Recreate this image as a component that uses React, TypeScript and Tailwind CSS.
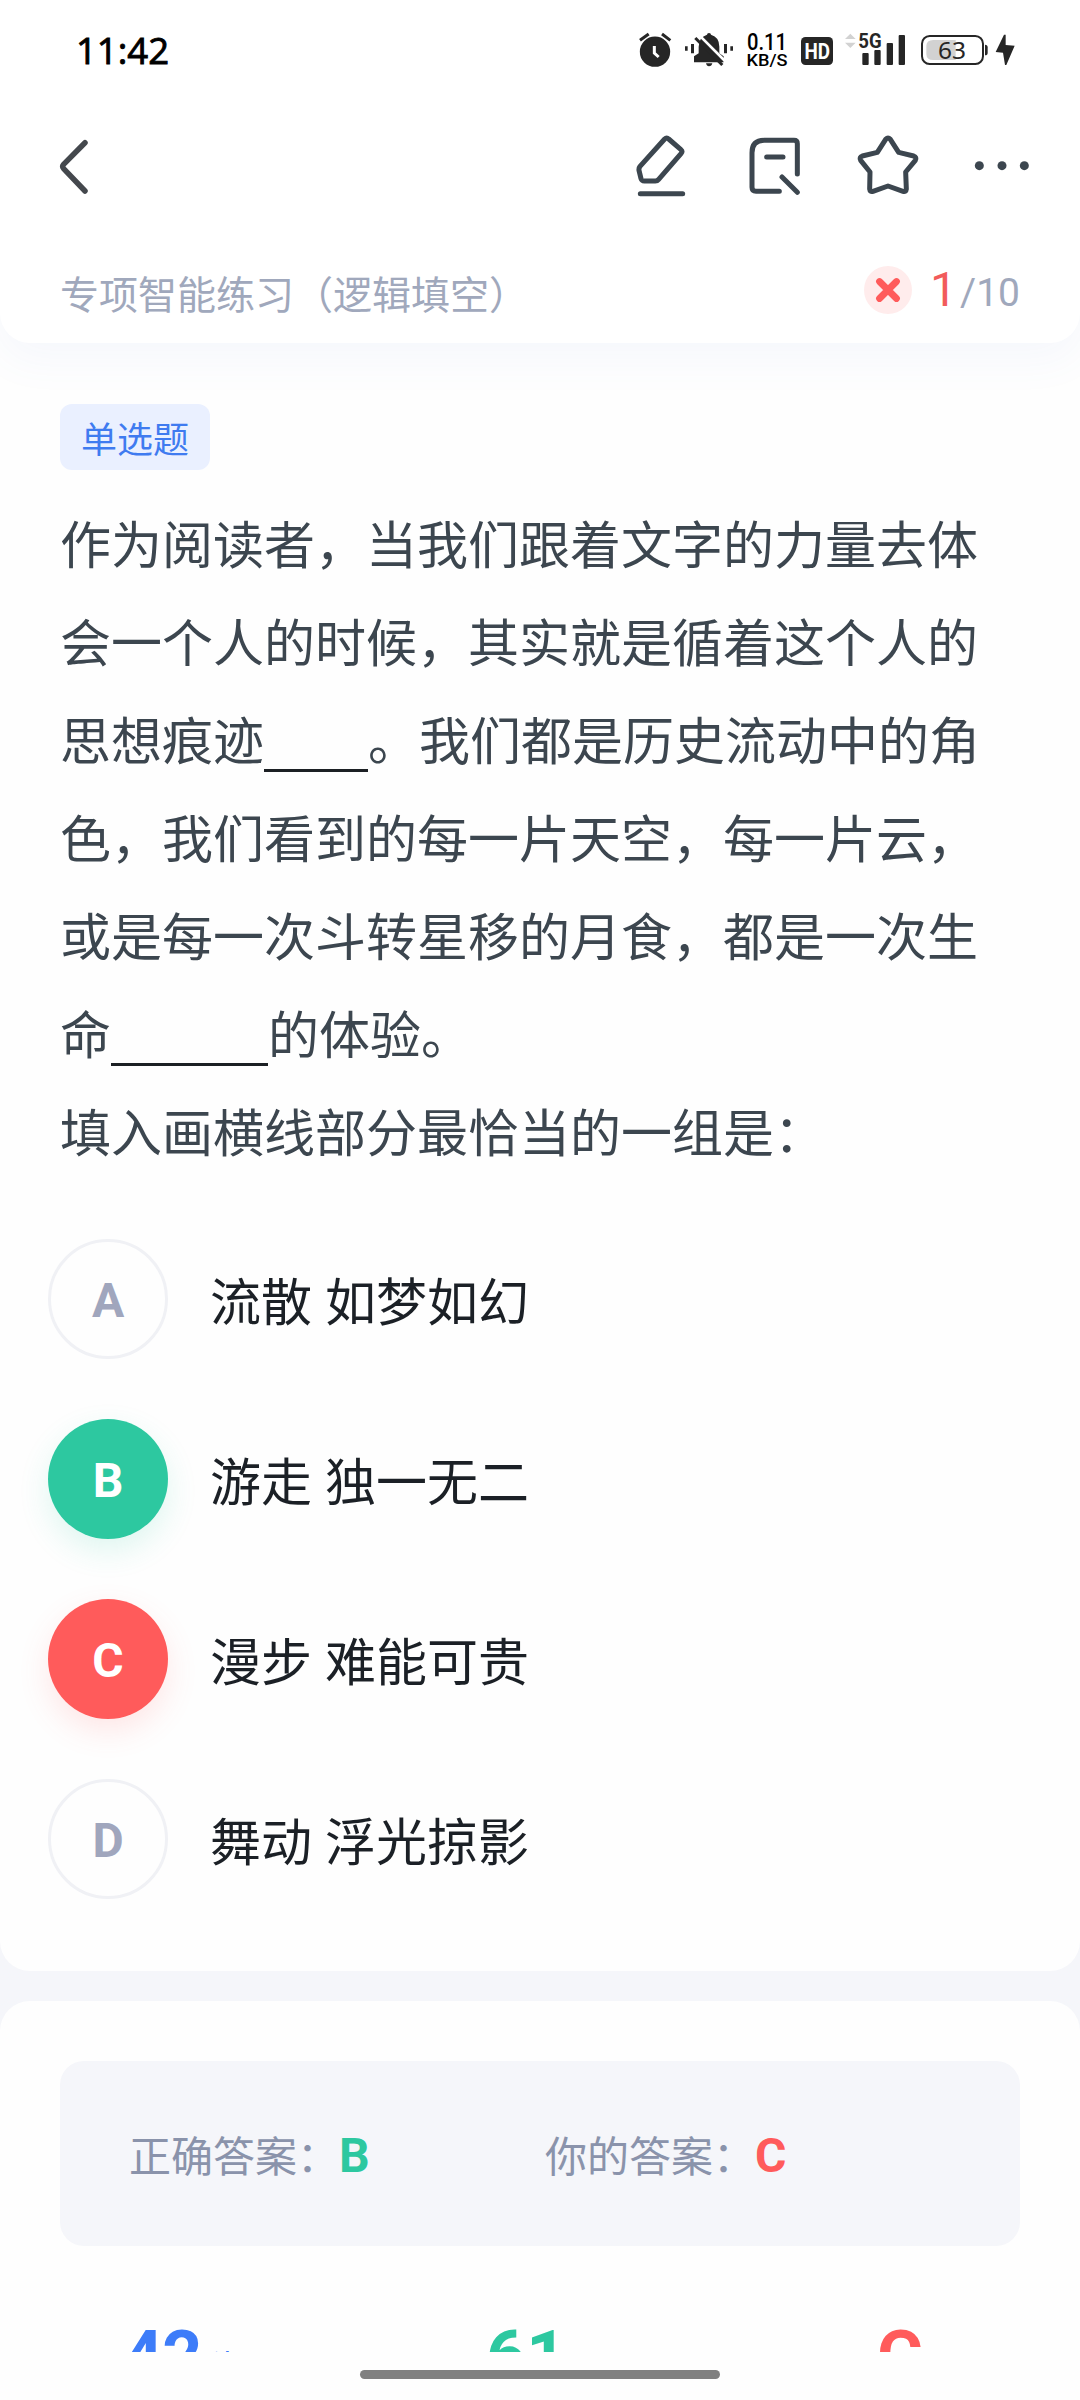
import React from "react";

const cjk = "font-['Noto_Sans_CJK_SC',sans-serif]";

function StatusIcons() {
  const ink = "#262626";
  return (
    <div className="flex items-center">
      <svg width="33" height="36" viewBox="117 96 99 108">
        <circle cx="165" cy="155" r="45.5" fill={ink} />
        <path d="M120 121L146 102M186 102L211 121" stroke={ink} strokeWidth="9" />
        <path d="M163 138V159L176 171" fill="none" stroke="#fff" strokeWidth="9" />
      </svg>
      <svg className="ml-3" width="50" height="36" viewBox="252 96 150 108">
        <path d="M255 139h8v13h-8zM273 132h9v28h-9zM372 132h9v28h-9zM391 139h8v13h-8z" fill={ink} />
        <path
          d="M321 104Q321 99 327 99Q333 99 333 104Q358 111 358 140V160L371 169V187H282V169L296 160V140Q297 111 321 104ZM318 190H337Q335 199 327 199Q320 199 318 190Z"
          fill={ink}
        />
        <path d="M296 104L378 186" stroke="#fff" strokeWidth="8" />
        <path d="M286 114L367 195" stroke={ink} strokeWidth="9" />
      </svg>
      <div className="ml-[13px] flex h-9 w-10 flex-col font-['Roboto',sans-serif] font-medium text-black">
        <svg className="overflow-visible" width="40" height="20" viewBox="0 0 40 20">
          <text x="0" y="17.6" textLength="40" lengthAdjust="spacingAndGlyphs" fontSize="24">0.11</text>
        </svg>
        <svg className="overflow-visible" width="40" height="16" viewBox="0 0 40 16">
          <text x="-0.5" y="14.4" textLength="41" lengthAdjust="spacingAndGlyphs" fontSize="17">KB/S</text>
        </svg>
      </div>
      <svg className="ml-[14px]" width="32" height="36" viewBox="0 0 32 36">
        <rect x="0" y="5" width="32" height="28" rx="4.5" fill={ink} />
        <text x="3.5" y="27.2" textLength="25.5" lengthAdjust="spacingAndGlyphs" fill="#fff" fontSize="22.5" className="font-['Roboto',sans-serif] font-bold">HD</text>
      </svg>
      <svg className="ml-3 overflow-visible" width="60" height="36" viewBox="735 96 180 108">
        <path d="M751 101L767 117H735ZM735 128H767L751 144Z" fill="#d2d2d2" />
        <path d="M790 159h13q3 0 3 3v30q0 3-3 3h-13q-3 0-3-3v-30q0-3 3-3zM826 150h13q3 0 3 3v39q0 3-3 3h-13q-3 0-3-3v-39q0-3 3-3zM863 129h13q3 0 3 3v60q0 3-3 3h-13q-3 0-3-3v-60q0-3 3-3zM899 105h13q3 0 3 3v84q0 3-3 3h-13q-3 0-3-3v-84q0-3 3-3z" fill={ink} />
        <text x="775" y="143" fontSize="61" textLength="70" lengthAdjust="spacingAndGlyphs" fill={ink} className="font-['Roboto',sans-serif] font-bold">5G</text>
      </svg>
      <svg className="ml-[15px]" width="68" height="36" viewBox="960 96 204 108">
        <path d="M1067 120H1000Q979 120 979 138V162Q979 180 1000 180H1067Z" fill="#d2d2d2" />
        <rect x="966" y="108" width="183" height="84" rx="23" fill="none" stroke={ink} strokeWidth="6" />
        <path d="M1155 134Q1163 134 1163 142V158Q1163 166 1155 166Z" fill={ink} />
        <text x="1014" y="178" fontSize="73" textLength="84" lengthAdjust="spacingAndGlyphs" fill={ink} className="font-['Noto_Sans',sans-serif]">63</text>
      </svg>
      <svg className="ml-[7px]" width="20" height="36" viewBox="1185 96 60 108">
        <path d="M1212 104L1187 156L1209 158L1215 195H1219L1244 137L1217 135V104Z" fill={ink} />
      </svg>
    </div>
  );
}

function NavBar() {
  const line = {
    fill: "none",
    stroke: "#3c464f",
    strokeWidth: 15,
    strokeLinecap: "round" as const,
    strokeLinejoin: "round" as const,
  };
  return (
    <div className="flex h-[134px] items-center pr-[50px] pl-[58px]">
      <svg width="32" height="68" viewBox="58 133 32 68">
        <path d="M85 142.7L63.6 164.4Q61.8 166.4 63.6 168.6L85 191" {...line} stroke="#44484d" strokeWidth="5.5" />
      </svg>
      <svg className="ml-auto" width="51" height="68" viewBox="105 399 153 204">
        <path d="M194 417Q200 411 206 417L242 448Q249 454 243 461L176 538Q172 543 166 543H133Q125 543 123 536L117 511Q116 504 120 499Z" {...line} />
        <path d="M121 581H248" {...line} />
      </svg>
      <svg className="ml-[62px]" width="53" height="68" viewBox="444 399 159 204">
        <path d="M592 522V431Q592 421 582 421H493Q456 421 456 458V562Q456 574 468 574H538M500 471H549M546 531L592 577" {...line} />
      </svg>
      <svg className="ml-[55px]" width="64" height="68" viewBox="768 399 192 204">
        <path d="M857 418Q864 411 871 418L896 457L941 468Q951 472 946 481L917 516L919 567Q918 577 909 574L864 558L819 574Q810 577 809 567L810 516L782 481Q777 472 787 468L832 457Z" {...line} />
      </svg>
      <svg className="ml-[54px]" width="56" height="68" viewBox="1122 399 168 204">
        <g fill="#3c464f">
          <circle cx="1138" cy="497" r="13.5" />
          <circle cx="1206" cy="497" r="13.5" />
          <circle cx="1273" cy="497" r="13.5" />
        </g>
      </svg>
    </div>
  );
}

function Blank({ width }: { width: string }) {
  return <span className={`inline-block h-px translate-y-3 border-b-[3px] border-[#1c2024] ${width}`} />;
}

const options = [
  { key: "A", text: "流散 如梦如幻", circle: "border-[3px] border-[#f0f1f5] text-[#a0a6bd]" },
  { key: "B", text: "游走 独一无二", circle: "bg-[#2dc8a0] text-white shadow-[0_12px_30px_rgba(45,200,160,0.15)]" },
  { key: "C", text: "漫步 难能可贵", circle: "bg-[#ff5b5b] text-white shadow-[0_12px_30px_rgba(255,91,91,0.15)]" },
  { key: "D", text: "舞动 浮光掠影", circle: "border-[3px] border-[#f0f1f5] text-[#a0a6bd]" },
];

export default function App() {
  return (
    <div lang="zh-CN" className={`flex h-[2400px] w-[1080px] flex-col overflow-hidden bg-[#f5f6fa] ${cjk}`}>
      <div className="flex h-[1971px] shrink-0 flex-col rounded-b-[30px] bg-[#fefefe]">
        <header className="h-[343px] shrink-0 rounded-b-[30px] bg-white shadow-[0_16px_44px_rgba(90,120,220,0.055)]">
          <div className="flex h-[100px] items-center justify-between pr-[65px] pl-[76px]">
            <span className="pt-px font-['Open_Sans',sans-serif] text-[36.5px] leading-none text-black [-webkit-text-stroke:0.9px_black]">11:42</span>
            <StatusIcons />
          </div>
          <NavBar />
          <div className="flex h-[109px] items-start justify-between px-[60px]">
            <span className="pt-[38px] text-[39px] leading-[40px] whitespace-nowrap text-[#a0a8bc]">专项智能练习（逻辑填空）</span>
            <div className="flex items-start pt-8">
              <svg width="48" height="48" viewBox="-24 -24 48 48">
                <circle r="24" fill="#ffecec" />
                <path d="M-8.5-8.5L8.5 8.5M8.5-8.5L-8.5 8.5" stroke="#ff5b5b" strokeWidth="6.8" strokeLinecap="round" />
              </svg>
              <div className="ml-[18px] flex items-baseline font-['Roboto',sans-serif] leading-[48px]">
                <span className="text-[48px] text-[#f25b5b]">1</span>
                <span className="ml-[3px] text-[39px] text-[#a0a8bc]">/10</span>
              </div>
            </div>
          </div>
        </header>

        <main className="px-[60px] pt-[61px]">
          <div className="flex h-[66px] w-[150px] items-center justify-center rounded-xl bg-[#eaf0ff] pb-px text-[36px] leading-none text-[#3f7bf0]">
            单选题
          </div>
          <div className="mt-[23px] text-[51px] leading-[98px] whitespace-nowrap text-[#3c464f]">
            <p>作为阅读者，当我们跟着文字的力量去体</p>
            <p>会一个人的时候，其实就是循着这个人的</p>
            <p>思想痕迹<Blank width="w-[104px]" />。我们都是历史流动中的角</p>
            <p>色，我们看到的每一片天空，每一片云，</p>
            <p>或是每一次斗转星移的月食，都是一次生</p>
            <p>命<Blank width="w-[157px]" />的体验。</p>
            <p>填入画横线部分最恰当的一组是：</p>
          </div>
          <ul className="mt-[60px] -ml-3 flex flex-col gap-[60px]">
            {options.map((o) => (
              <li key={o.key} className="flex h-[120px] items-center">
                <span className={`flex size-[120px] items-center justify-center rounded-full pt-1 font-['Roboto',sans-serif] text-[48px] leading-none font-bold ${o.circle}`}>
                  {o.key}
                </span>
                <span className="ml-[42px] pt-px text-[51px] leading-none whitespace-nowrap text-[#1b2026] [word-spacing:1.5px]">{o.text}</span>
              </li>
            ))}
          </ul>
        </main>
      </div>

      <section className="mt-[30px] h-[351px] shrink-0 overflow-hidden rounded-t-[30px] bg-[#fefefe] px-[60px] pt-[60px]">
        <div className="flex h-[185px] items-center rounded-3xl bg-[#f5f6fa] pt-[5px] pl-[69px] text-[42px] leading-none whitespace-nowrap text-[#8a93ab]">
          <div className="flex w-[416px] items-baseline">
            正确答案：
            <b className="font-['Roboto',sans-serif] text-[48px] leading-none text-[#2dc8a0]">B</b>
          </div>
          <div className="flex items-baseline">
            你的答案：
            <b className="font-['Roboto',sans-serif] text-[48px] leading-none text-[#ff5b5b]">C</b>
          </div>
        </div>
        <div className="mt-[76px] flex pl-[63px] font-['Roboto',sans-serif] text-[70px] leading-[69px] font-bold">
          <div className="flex w-[363px] items-start tracking-[-1px] text-[#3d7cf9]">
            42
            <span className={`mt-[26px] ml-0.5 text-[36px] leading-[36px] font-normal ${cjk}`}>秒</span>
          </div>
          <div className="w-[391px] text-[#2dc8a0]">61</div>
          <div className="text-[#ff5b5b]">C</div>
        </div>
      </section>

      <footer className="flex h-12 shrink-0 justify-center bg-[#fefefe] pt-[18px]">
        <div className="h-[9px] w-[360px] rounded-full bg-[#808080]" />
      </footer>
    </div>
  );
}
